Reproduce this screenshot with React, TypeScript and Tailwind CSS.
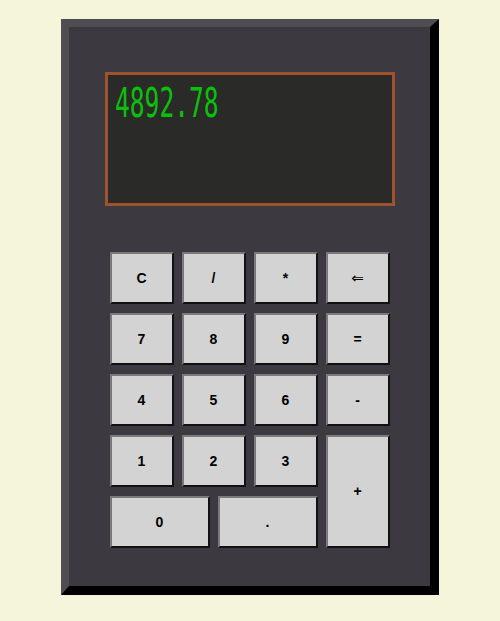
const KEYS = ['C', '/', '*', '⇐', '7', '8', '9', '=', '4', '5', '6', '-', '1', '2', '3'];

const KEY_CLASS =
  'flex items-center justify-center bg-[#d3d3d3] text-black text-[14px] font-bold border-2 border-t-[#7a7a7a] border-l-[#7a7a7a] border-r-[#111] border-b-[#111]';

function Key({ label, className = '' }: { label: string; className?: string }) {
  return (
    <button className={`${KEY_CLASS} ${className}`} style={{ fontFamily: '"Liberation Sans", Arial, sans-serif' }}>
      {label === '⇐' ? <span className="font-normal text-[15px]" style={{ fontFamily: '"DejaVu Sans", sans-serif' }}>{label}</span> : label}
    </button>
  );
}

export default function App() {
  return (
    <div className="min-h-screen w-full bg-[#f5f5dc] pt-[19px]">
      <div className="mx-auto w-[378px] h-[576px] bg-[#3c3a40] border-t-8 border-l-8 border-r-[9px] border-b-[9px] border-t-[#4f4d52] border-l-[#4f4d52] border-r-black border-b-black pt-[45px]">
        {/* Display */}
        <div className="mx-auto w-[290px] h-[134px] bg-[#2a2a28] border-[3px] border-[#a0522d] pl-[7px] pt-[8px] overflow-hidden">
          <div
            className="text-[41px] leading-none text-[#0cc00c] origin-left scale-x-[0.6] whitespace-nowrap"
            style={{ fontFamily: '"DejaVu Sans Mono", monospace' }}
          >
            4892.78
          </div>
        </div>

        {/* Keypad */}
        <div className="mx-auto mt-[46px] w-[280px] grid grid-cols-4 grid-rows-[repeat(5,52px)] gap-x-2 gap-y-[9px]">
          {KEYS.map((k) => (
            <Key key={k} label={k} />
          ))}
          <Key label="+" className="row-span-2" />
          <div className="col-span-3 flex gap-2">
            <Key label="0" className="flex-1" />
            <Key label="." className="flex-1" />
          </div>
        </div>
      </div>
    </div>
  );
}
